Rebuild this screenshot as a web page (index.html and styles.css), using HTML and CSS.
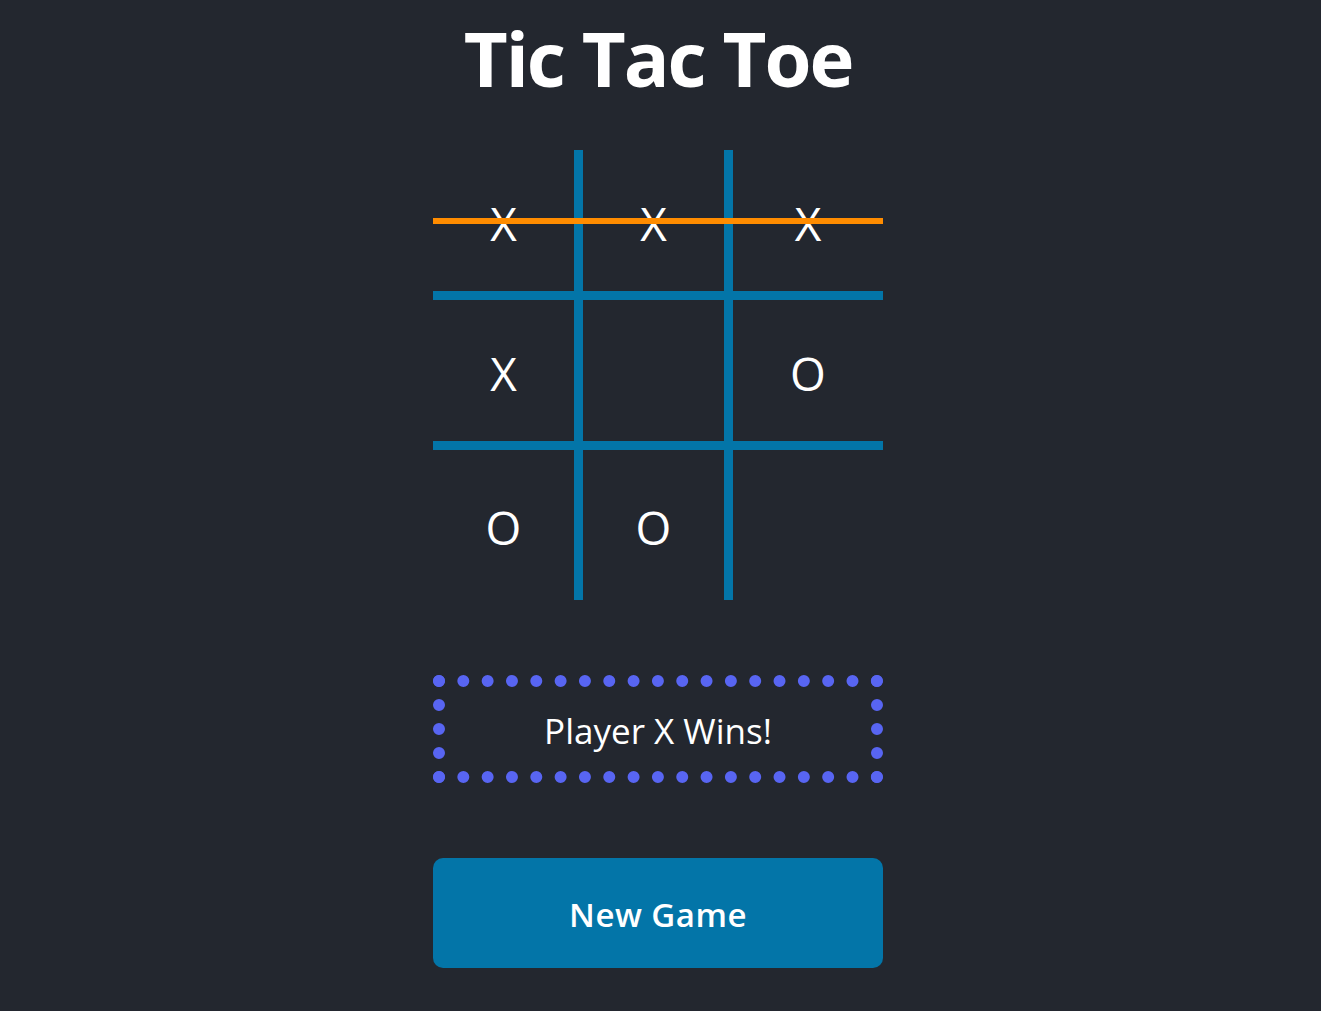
FILE: index.html
```html
<!DOCTYPE html>
<html lang="en">
<head>
<meta charset="utf-8">
<title>Tic Tac Toe</title>
<link rel="stylesheet" href="styles.css">
</head>
<body>
<main class="app">
  <h1 class="title">Tic Tac Toe</h1>
  <div class="board">
    <div class="cell">X</div>
    <div class="cell">X</div>
    <div class="cell last-col">X</div>
    <div class="cell">X</div>
    <div class="cell"></div>
    <div class="cell last-col">O</div>
    <div class="cell last-row">O</div>
    <div class="cell last-row">O</div>
    <div class="cell last-row last-col"></div>
    <div class="win-line"></div>
  </div>
  <div class="status">Player X Wins!</div>
  <button class="new-game" type="button">New Game</button>
</main>
</body>
</html>
```

FILE: styles.css
```css
html, body {
  margin: 0;
  background: #23272f;
  color: #ffffff;
  font-family: "Open Sans", "Noto Sans", sans-serif;
}

.app {
  display: flex;
  flex-direction: column;
  align-items: center;
  padding-right: 5px;
}

.title {
  margin: 12px 0 46px;
  font-size: 76px;
  line-height: 92px;
  font-weight: 700;
  letter-spacing: -2px;
}

.board {
  position: relative;
  display: grid;
  grid-template-columns: repeat(3, 150px);
  grid-template-rows: repeat(3, 150px);
  width: 450px;
}

.cell {
  box-sizing: border-box;
  border-right: 9px solid #0375a8;
  border-bottom: 9px solid #0375a8;
  display: flex;
  align-items: center;
  justify-content: center;
  padding-top: 4px;
  font-size: 46px;
  font-weight: 400;
  color: #ffffff;
}

.cell.last-col {
  border-right: none;
}

.cell.last-row {
  border-bottom: none;
}

.win-line {
  position: absolute;
  left: 0;
  top: 68px;
  width: 450px;
  height: 6px;
  background: #ff8c00;
}

.status {
  box-sizing: border-box;
  margin-top: 75px;
  width: 450px;
  height: 108px;
  border: 12px dotted #5865f2;
  display: flex;
  align-items: center;
  justify-content: center;
  padding-top: 3px;
  font-size: 35px;
  letter-spacing: 0;
}

.new-game {
  margin-top: 75px;
  width: 450px;
  height: 110px;
  border: none;
  border-radius: 10px;
  background: #0375a8;
  color: #ffffff;
  font-family: "Open Sans", "Noto Sans", sans-serif;
  font-size: 33px;
  font-weight: 600;
  letter-spacing: 0.5px;
  padding: 2px 0 0;
}
```
